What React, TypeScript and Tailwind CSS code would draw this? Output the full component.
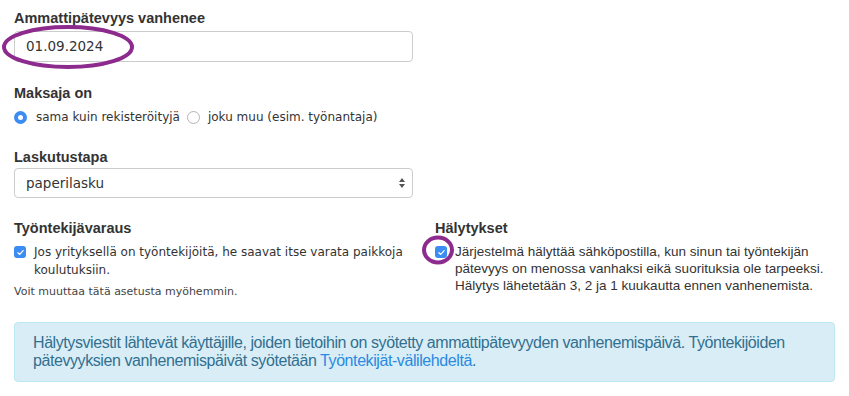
import React from "react";

const Check = () => (
  <span className="mt-[3px] flex h-[12px] w-[12px] shrink-0 items-center justify-center rounded-[3px] bg-[#3b8df2]">
    <svg viewBox="0 0 12 12" className="h-[9px] w-[9px]">
      <path d="M2.5 6.3 L5 8.6 L9.5 3.4" fill="none" stroke="#fff" strokeWidth="1.6" strokeLinecap="round" strokeLinejoin="round" />
    </svg>
  </span>
);

const Radio = ({ on }: { on?: boolean }) =>
  on ? (
    <span className="flex h-[13px] w-[13px] shrink-0 items-center justify-center rounded-full bg-[#3b8df2]">
      <span className="h-[5px] w-[5px] rounded-full bg-white" />
    </span>
  ) : (
    <span className="block h-[13px] w-[13px] shrink-0 rounded-full border border-[#b5b5b5] bg-white" />
  );

const Label = ({ children }: { children: React.ReactNode }) => (
  <div
    className="text-[14.5px] font-bold leading-[20px] text-[#333]"
    style={{ fontFamily: '"Liberation Sans", Arial, sans-serif' }}
  >
    {children}
  </div>
);

export default function App() {
  return (
    <div
      className="relative min-h-[396px] w-[849px] bg-white px-[14px] pt-[8px] text-[#333]"
      style={{ fontFamily: '"DejaVu Sans", Verdana, sans-serif' }}
    >
      <div className="w-[399px]">
        <Label>Ammattipätevyys vanhenee</Label>
        <div className="mt-[3px] flex h-[31px] items-center rounded-[4px] border border-[#ccc] px-[11px] text-[13.5px]">
          01.09.2024
        </div>

        <div className="mt-[21px]">
          <Label>Maksaja on</Label>
          <div className="mt-[5px] flex items-center text-[12px] leading-[18px]">
            <Radio on />
            <span className="ml-[9px]">sama kuin rekisteröityjä</span>
            <span className="ml-[7px]">
              <Radio />
            </span>
            <span className="ml-[8px]">joku muu (esim. työnantaja)</span>
          </div>
        </div>

        <div className="mt-[21px]">
          <Label>Laskutustapa</Label>
          <div className="mt-[1px] flex h-[30px] items-center justify-between rounded-[4px] border border-[#ccc] pl-[11px] pr-[6px] text-[13.5px]">
            <span>paperilasku</span>
            <svg viewBox="0 0 8 12" className="h-[12px] w-[8px]">
              <path d="M4 1 L7 5 L1 5 Z" fill="#555" />
              <path d="M4 11 L7 7 L1 7 Z" fill="#555" />
            </svg>
          </div>
        </div>
      </div>

      <div className="mt-[20px] grid grid-cols-2 gap-x-[21px]">
        <div>
          <Label>Työntekijävaraus</Label>
          <div className="mt-[5px] flex gap-[8px] text-[12px] leading-[18px]">
            <Check />
            <span>Jos yrityksellä on työntekijöitä, he saavat itse varata paikkoja koulutuksiin.</span>
          </div>
          <div className="mt-[4px] text-[11px] leading-[17px] text-[#444]">Voit muuttaa tätä asetusta myöhemmin.</div>
        </div>
        <div>
          <Label>Hälytykset</Label>
          <div
            className="mt-[5px] flex gap-[8px] text-[13.5px] leading-[17px]"
            style={{ fontFamily: '"Liberation Sans", Arial, sans-serif' }}
          >
            <Check />
            <span>
              Järjestelmä hälyttää sähköpostilla, kun sinun tai työntekijän pätevyys on menossa vanhaksi eikä
              suorituksia ole tarpeeksi. Hälytys lähetetään 3, 2 ja 1 kuukautta ennen vanhenemista.
            </span>
          </div>
        </div>
      </div>

      <div
        className="mt-[22px] rounded-[4px] border border-[#bce8f1] bg-[#d9edf7] px-[18px] py-[11px] text-[16px] leading-[18px] tracking-[-0.42px] text-[#31708f]"
        style={{ fontFamily: '"Liberation Sans", Arial, sans-serif' }}
      >
        Hälytysviestit lähtevät käyttäjille, joiden tietoihin on syötetty ammattipätevyyden vanhenemispäivä. Työntekijöiden
        pätevyyksien vanhenemispäivät syötetään <span className="text-[#2a8ae0]">Työntekijät-välilehdeltä</span>.
      </div>

      <svg className="pointer-events-none absolute left-0 top-0" width="849" height="396">
        <ellipse cx="68" cy="47" rx="64" ry="20" fill="none" stroke="#8c2a8e" strokeWidth="4" />
        <ellipse cx="438" cy="250" rx="14" ry="12.5" fill="none" stroke="#8c2a8e" strokeWidth="4" />
      </svg>
    </div>
  );
}
